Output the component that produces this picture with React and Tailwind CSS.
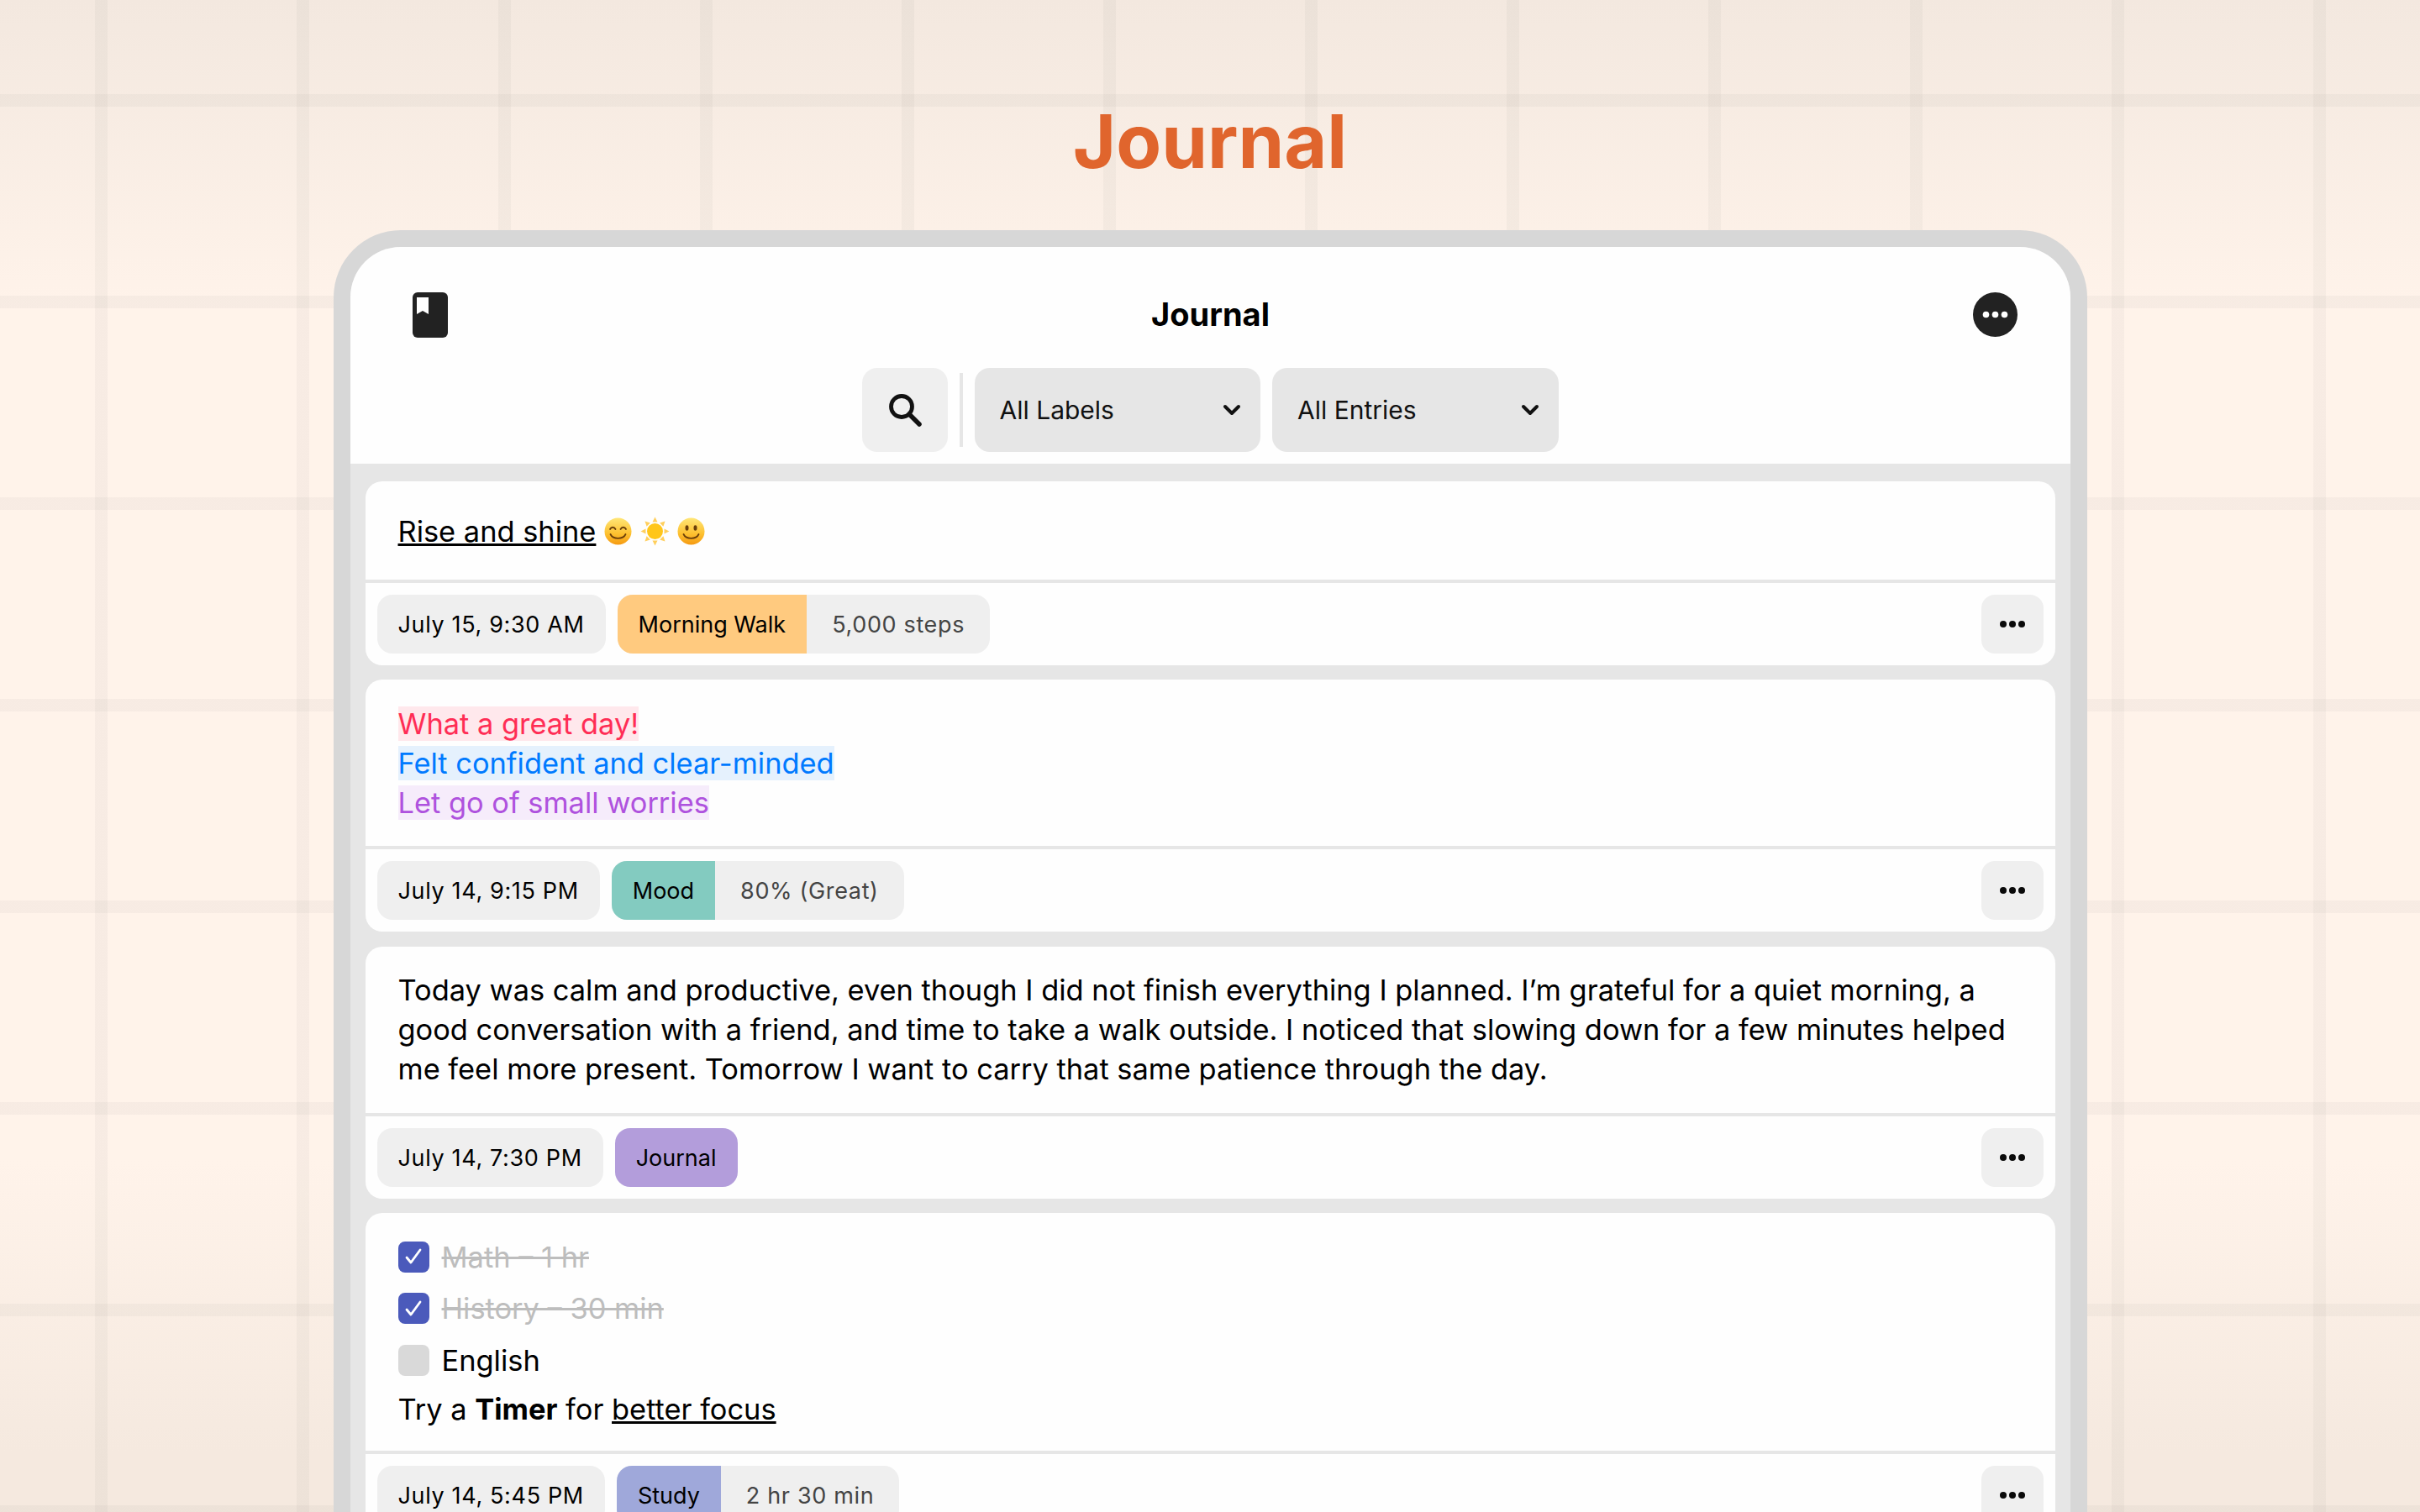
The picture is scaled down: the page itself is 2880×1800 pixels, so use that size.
import React from "react";

const font = "font-['Inter','Liberation_Sans',sans-serif]";

function Dots() {
  return (
    <svg width="32" height="10" viewBox="0 0 32 10" className="block">
      <circle cx="5" cy="5" r="4" fill="#0a0a0a" />
      <circle cx="16" cy="5" r="4" fill="#0a0a0a" />
      <circle cx="27" cy="5" r="4" fill="#0a0a0a" />
    </svg>
  );
}

function Chevron() {
  return (
    <svg width="22" height="14" viewBox="0 0 22 14" className="block">
      <path d="M3 3l8 8 8-8" fill="none" stroke="#111" strokeWidth="4" strokeLinecap="round" strokeLinejoin="round" />
    </svg>
  );
}

function SmileEmoji({ closed }) {
  const id = closed ? "faceA" : "faceB";
  return (
    <svg width="33" height="33" viewBox="0 0 33 33" className="inline-block align-[-4px]">
      <defs>
        <linearGradient id={id} x1="0" y1="0" x2="0" y2="1">
          <stop offset="0" stopColor="#ffe677" />
          <stop offset="0.6" stopColor="#fdc02f" />
          <stop offset="1" stopColor="#f59a12" />
        </linearGradient>
      </defs>
      <circle cx="16.5" cy="16.5" r="16" fill={`url(#${id})`} />
      {closed ? (
        <path d="M7 14c1.5-3 5-3 6.500 0M19.500 14c1.500-3 5-3 6.500 0" fill="none" stroke="#6b3f0a" strokeWidth="1.800" strokeLinecap="round" />
      ) : (
        <>
          <ellipse cx="11.500" cy="12.500" rx="2" ry="3.200" fill="#6b3f0a" />
          <ellipse cx="21.500" cy="12.500" rx="2" ry="3.200" fill="#6b3f0a" />
        </>
      )}
      <path d="M7.500 20c3 6.500 15 6.500 18 0" fill="none" stroke="#6b3f0a" strokeWidth="1.800" strokeLinecap="round" />
    </svg>
  );
}

function SunEmoji() {
  const rays = [0, 45, 90, 135, 180, 225, 270, 315];
  return (
    <svg width="35" height="35" viewBox="0 0 35 35" className="inline-block align-[-5px]">
      {rays.map((r) => (
        <path key={r} d="M17.500 0.500l3 6h-6z" fill="#ffcf5c" transform={`rotate(${r} 17.500 17.500)`} />
      ))}
      <circle cx="17.500" cy="17.500" r="9.500" fill="#ffc61a" />
    </svg>
  );
}

function Checkbox({ checked }) {
  return (
    <span className={`flex h-[37px] w-[37px] shrink-0 items-center justify-center rounded-[8px] ${checked ? "bg-[#4b5abb]" : "bg-[#d9d9d9]"}`}>
      {checked && (
        <svg width="24" height="24" viewBox="0 0 24 24">
          <path d="M4 13l5 6L20 4" fill="none" stroke="#fff" strokeWidth="2.800" strokeLinecap="round" strokeLinejoin="round" />
        </svg>
      )}
    </span>
  );
}

function Footer({ date, label, value, color }) {
  return (
    <div className="flex items-center gap-[14px] border-t-[4px] border-[#e6e6e6] p-[14px] text-[27px] leading-[72px]">
      <div className="h-[70px] rounded-[18px] bg-[#efefef] px-[25px] tracking-[0.65px] text-black">{date}</div>
      <div className="flex h-[70px] overflow-hidden rounded-[18px] bg-[#efefef]">
        <div className={`px-[25px] text-black ${color}`}>{label}</div>
        {value && <div className="px-[30px] tracking-[0.65px] text-[#444]">{value}</div>}
      </div>
      <button className="ml-auto flex h-[70px] w-[74px] items-center justify-center rounded-[16px] bg-[#efefef]">
        <Dots />
      </button>
    </div>
  );
}

function Card({ children, footer, bodyClass = "py-[28.5px]" }) {
  return (
    <div className="rounded-[20px] bg-[#fefefe]">
      <div className={`px-[39px] text-[34.4px] leading-[47px] text-black ${bodyClass}`}>{children}</div>
      <Footer {...footer} />
    </div>
  );
}

function Select({ label }) {
  return (
    <button className="flex h-[100px] w-[340.5px] items-center justify-between rounded-[18px] bg-[#e6e6e6] pl-[30px] pr-[23px] text-[30px] text-[#111]">
      {label}
      <Chevron />
    </button>
  );
}

export default function App() {
  return (
    <div className={`h-[1800px] w-[2880px] overflow-hidden ${font} bg-[linear-gradient(to_bottom,#f3e8df,#fff3ea_370px,#fff3ea_1380px,#f5e9df_1730px)]`}>
      <div className="h-full w-full bg-[linear-gradient(to_right,transparent_113px,rgba(60,60,60,0.04)_113px,rgba(60,60,60,0.04)_128px,transparent_128px),linear-gradient(to_bottom,transparent_112px,rgba(60,60,60,0.04)_112px,rgba(60,60,60,0.04)_127px,transparent_127px)] bg-[length:240px_240px]">
        <h1 className="pt-[114px] text-center text-[88px] font-bold leading-[108px] text-[#e0652d]">Journal</h1>
        <div className="mx-auto mt-[51.5px] w-[2087px] rounded-t-[80px] border-[20px] border-b-0 border-[#d7d7d7] bg-[#e6e6e6]">
          <div className="h-[258px] rounded-t-[60px] bg-[#fefefe] pt-[52.5px]">
            <div className="flex items-center justify-between pl-[74px] pr-[62px]">
              <svg width="42" height="54" viewBox="0 0 42 54" className="block">
                <rect width="42" height="54" rx="6" fill="#222" />
                <path d="M5 6h14v20l-7-4-7 4z" fill="#fff" />
              </svg>
              <div className="text-[38px] font-bold text-black">Journal</div>
              <svg width="53" height="53" viewBox="0 0 53 53" className="block">
                <circle cx="26.500" cy="26.500" r="26.500" fill="#222" />
                <circle cx="15.500" cy="26.500" r="3.800" fill="#fff" />
                <circle cx="26.500" cy="26.500" r="3.800" fill="#fff" />
                <circle cx="37.500" cy="26.500" r="3.800" fill="#fff" />
              </svg>
            </div>
            <div className="mt-[35px] flex items-center justify-center gap-[14px]">
              <button className="flex h-[100px] w-[102px] items-center justify-center rounded-[18px] bg-[#efefef]">
                <svg width="44" height="44" viewBox="0 0 44 44">
                  <circle cx="18" cy="18" r="12.500" fill="none" stroke="#111" strokeWidth="4.800" />
                  <path d="M27 27l12 12" stroke="#111" strokeWidth="5.500" strokeLinecap="round" />
                </svg>
              </button>
              <div className="h-[88px] w-[4px] bg-[#e6e6e6]" />
              <Select label="All Labels" />
              <Select label="All Entries" />
            </div>
          </div>
          <div className="flex flex-col gap-[17.5px] px-[18px] pt-[21px]">
            <Card
              bodyClass="pt-[36.5px] pb-[33.5px]"
              footer={{ date: "July 15, 9:30 AM", label: "Morning Walk", value: "5,000 steps", color: "bg-[#ffca7f]" }}
            >
              <span className="underline">Rise and shine</span> <SmileEmoji closed /> <SunEmoji /> <SmileEmoji />
            </Card>
            <Card footer={{ date: "July 14, 9:15 PM", label: "Mood", value: "80% (Great)", color: "bg-[#83cbc0]" }}>
              <span className="bg-[#ffe8ec] text-[#ff2d55]">What a great day!</span>
              <br />
              <span className="bg-[#e5f1fd] text-[#007aff]">Felt confident and clear-minded</span>
              <br />
              <span className="bg-[#f6ecfb] text-[#af52de]">Let go of small worries</span>
            </Card>
            <Card footer={{ date: "July 14, 7:30 PM", label: "Journal", color: "bg-[#b39ddb]" }}>
              Today was calm and productive, even though I did not finish everything I planned. I’m grateful for a quiet morning, a good conversation with a friend, and time to take a walk outside. I noticed that slowing down for a few minutes helped me feel more present. Tomorrow I want to carry that same patience through the day.
            </Card>
            <Card
              bodyClass="pt-[28.5px] pb-[26px]"
              footer={{ date: "July 14, 5:45 PM", label: "Study", value: "2 hr 30 min", color: "bg-[#9fa8da]" }}
            >
              <div className="flex flex-col gap-[14.5px]">
                <div className="flex items-center gap-[15px]">
                  <Checkbox checked />
                  <span className="text-[#bdbdbd] line-through">Math – 1 hr</span>
                </div>
                <div className="flex items-center gap-[15px]">
                  <Checkbox checked />
                  <span className="text-[#bdbdbd] line-through">History – 30 min</span>
                </div>
                <div className="flex items-center gap-[15px]">
                  <Checkbox />
                  <span>English</span>
                </div>
              </div>
              <div className="mt-[11px]">
                Try a <b className="font-bold">Timer</b> for <span className="underline">better focus</span>
              </div>
            </Card>
          </div>
        </div>
      </div>
    </div>
  );
}
